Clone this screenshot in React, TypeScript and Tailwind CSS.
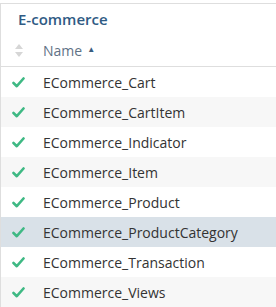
const rows = [
  'ECommerce_Cart',
  'ECommerce_CartItem',
  'ECommerce_Indicator',
  'ECommerce_Item',
  'ECommerce_Product',
  'ECommerce_ProductCategory',
  'ECommerce_Transaction',
  'ECommerce_Views',
]

function Check() {
  return (
    <svg width="13" height="11" viewBox="0 0 13 11" className="shrink-0">
      <path d="M1.5 6 L4.8 9.2 L11.5 1.5" fill="none" stroke="#3fb984" strokeWidth="2.6" strokeLinecap="round" strokeLinejoin="round" />
    </svg>
  )
}

export default function App() {
  return (
    <div className="w-[276px] h-[307px] bg-white pt-[3px] overflow-hidden" style={{ fontFamily: '"Open Sans", sans-serif' }}>
      <div className="border-t border-l border-[#dedede] h-full">
        <div className="h-[31px] flex items-center pl-[17px] text-[15px] font-semibold text-[#2f5b84]">E-commerce</div>
        <div className="h-[32px] flex items-center border-b border-[#dedede]">
          <div className="w-[42px] pl-[14px] flex flex-col items-start">
            <svg width="8" height="13" viewBox="0 0 8 13">
              <path d="M4 0 L8 5 L0 5 Z" fill="#d6d6d6" />
              <path d="M4 13 L8 8 L0 8 Z" fill="#d6d6d6" />
            </svg>
          </div>
          <span className="text-[14px] text-[#5f7286]">Name</span>
          <span className="text-[8px] text-[#3a5c7e] ml-[5px] -mt-[4px]">▲</span>
        </div>
        {rows.map((r, i) => (
          <div
            key={r}
            className={`h-[30px] flex items-center ${r === 'ECommerce_ProductCategory' ? 'bg-[#d9e1e8]' : i % 2 === 1 ? 'bg-[#f7f7f7]' : 'bg-white'}`}
          >
            <div className="w-[42px] pl-[11px]">
              <Check />
            </div>
            <span className="text-[14px] text-[#333333]">{r}</span>
          </div>
        ))}
      </div>
    </div>
  )
}
